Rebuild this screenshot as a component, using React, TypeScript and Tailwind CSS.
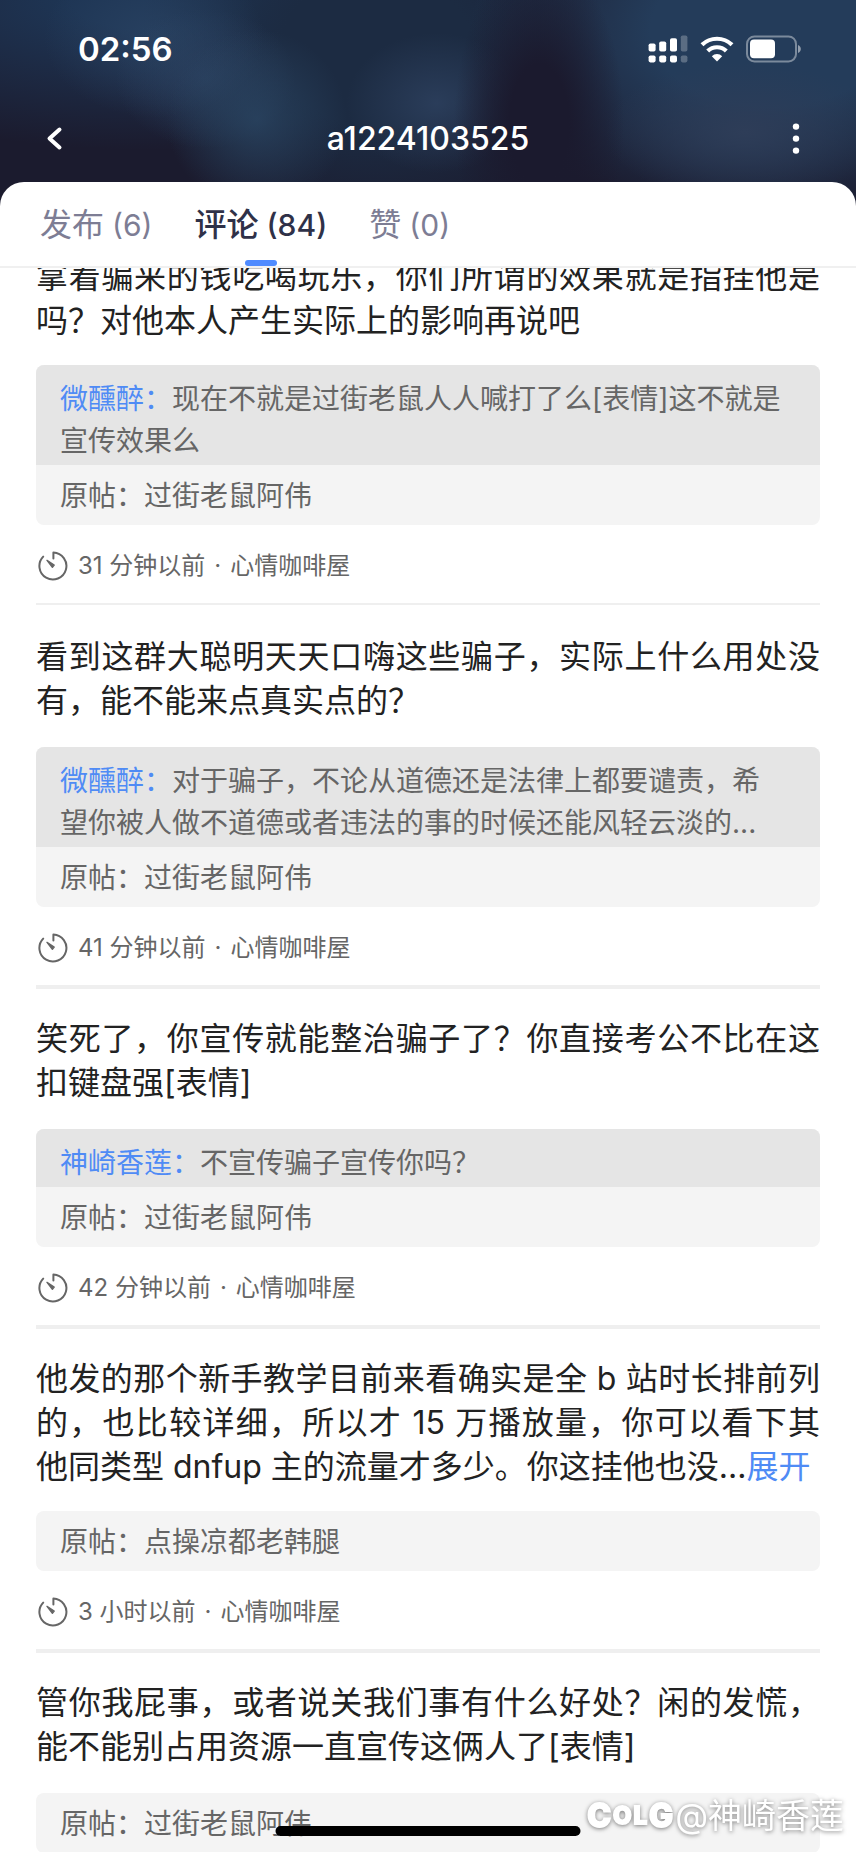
import React, { useState } from 'react';
import { clsx } from 'clsx';

interface Comment {
  id: number;
  lines: string[];
  long?: boolean;
  truncated?: boolean;
  reply?: { user: string; text: string };
  post: string;
  time?: string;
}

const comments: Comment[] = [
  {
    id: 1,
    lines: ['拿着骗来的钱吃喝玩乐，你们所谓的效果就是指挂他是', '吗？对他本人产生实际上的影响再说吧'],
    long: true,
    reply: { user: '微醺醉', text: '现在不就是过街老鼠人人喊打了么[表情]这不就是宣传效果么' },
    post: '过街老鼠阿伟',
    time: '31 分钟以前',
  },
  {
    id: 2,
    lines: ['看到这群大聪明天天口嗨这些骗子，实际上什么用处没', '有，能不能来点真实点的？'],
    reply: { user: '微醺醉', text: '对于骗子，不论从道德还是法律上都要谴责，希望你被人做不道德或者违法的事的时候还能风轻云淡的...' },
    post: '过街老鼠阿伟',
    time: '41 分钟以前',
  },
  {
    id: 3,
    lines: ['笑死了，你宣传就能整治骗子了？你直接考公不比在这', '扣键盘强[表情]'],
    reply: { user: '神崎香莲', text: '不宣传骗子宣传你吗？' },
    post: '过街老鼠阿伟',
    time: '42 分钟以前',
  },
  {
    id: 4,
    lines: [
      '他发的那个新手教学目前来看确实是全 b 站时长排前列',
      '的，也比较详细，所以才 15 万播放量，你可以看下其',
      '他同类型 dnfup 主的流量才多少。你这挂他也没...',
    ],
    long: true,
    truncated: true,
    post: '点操凉都老韩腿',
    time: '3 小时以前',
  },
  {
    id: 5,
    lines: ['管你我屁事，或者说关我们事有什么好处？闲的发慌，', '能不能别占用资源一直宣传这俩人了[表情]'],
    post: '过街老鼠阿伟',
  },
];

const tabs = [
  { id: 'posts', label: '发布', count: 6 },
  { id: 'comments', label: '评论', count: 84 },
  { id: 'likes', label: '赞', count: 0 },
];

function StatusIcons() {
  return (
    <div className="flex items-center">
      <svg width="40" height="28" viewBox="0 0 40 28" fill="#fff" aria-hidden="true">
        <rect x="0.6" y="8.5" width="7" height="8" rx="1.8" />
        <rect x="11.2" y="6.5" width="7" height="10" rx="1.8" />
        <rect x="22" y="3.2" width="7" height="13.3" rx="1.8" />
        <rect x="0.6" y="20.4" width="7" height="7" rx="1.8" />
        <rect x="11.2" y="20.4" width="7" height="7" rx="1.8" />
        <rect x="22" y="20.4" width="7" height="7" rx="1.8" />
        <g opacity="0.25">
          <rect x="32.8" y="0.5" width="6.6" height="16" rx="1.8" />
          <rect x="32.8" y="20.4" width="6.6" height="7" rx="1.8" />
        </g>
      </svg>
      <svg className="ml-3" width="34" height="26" viewBox="0 0 34 26" fill="none" stroke="#fff" aria-hidden="true">
        <path d="M2 8.8a21.6 21.6 0 0 1 30 0" strokeWidth="4.2" />
        <path d="M7.7 15a13.4 13.4 0 0 1 18.6 0" strokeWidth="4.2" />
        <path d="M17 25.4l-5.2-5.2a7.4 7.4 0 0 1 10.4 0z" fill="#fff" stroke="none" />
      </svg>
      <svg className="ml-3" width="56" height="28" viewBox="0 0 56 28" aria-hidden="true">
        <rect x="1" y="1.4" width="49" height="25" rx="7.5" fill="none" stroke="#fff" strokeOpacity="0.4" strokeWidth="2" />
        <rect x="4" y="4.6" width="25" height="18.6" rx="4" fill="#fff" />
        <path d="M52 10v8c2-1 2.8-2.4 2.8-4s-.8-3-2.8-4z" fill="#fff" fillOpacity="0.5" />
      </svg>
    </div>
  );
}

function ClockIcon() {
  return (
    <svg width="30" height="30" viewBox="0 0 30 30" fill="none" stroke="#666" strokeWidth="2" strokeLinecap="round" strokeLinejoin="round" aria-hidden="true">
      <path d="M15.4 7.6V1.5A13.5 13.5 0 1 1 5.2 5.6" />
      <path d="M9 9.4l7.2 4.6-1.8 2.2z" fill="#666" strokeWidth="1.4" />
    </svg>
  );
}

function CommentItem({ comment }: { comment: Comment }) {
  const { lines, long, truncated, reply, post, time } = comment;

  return (
    <article>
      <p className="text-[32px] leading-[44px] text-[#222]">
        {lines.map((line, i) => (
          <span key={line} className={clsx('block', i < lines.length - 1 && '[text-align-last:justify]')}>
            {line}
            {truncated && i === lines.length - 1 && (
              <button type="button" className="text-[#4f8bf5]">展开</button>
            )}
          </span>
        ))}
      </p>

      <div className={clsx('overflow-hidden rounded-lg bg-[#f4f4f4] text-[28px] leading-[42px] text-[#666]', long ? 'mt-[22px]' : 'mt-6')}>
        {reply && (
          <p className="bg-[#e5e5e5] pt-[13px] pr-9 pb-[3px] pl-6">
            <a href="#user" className="text-[#4f8bf5]">{reply.user}：</a>
            {reply.text}
          </p>
        )}
        <p className="px-6 pt-[10px] pb-2">原帖：{post}</p>
      </div>

      {time && (
        <div className="mt-5 flex h-[42px] items-center gap-[10px] pl-[2px] text-2xl text-[#666]">
          <ClockIcon />
          <div className="flex gap-[9px]">
            <time>{time}</time>
            <span>·</span>
            <span>心情咖啡屋</span>
          </div>
        </div>
      )}
    </article>
  );
}

export default function App() {
  const [activeTab, setActiveTab] = useState('comments');

  return (
    <div className="relative flex h-screen flex-col overflow-hidden bg-white font-['Inter','Noto_Sans_CJK_SC',sans-serif]">
      {/* Blurred cover */}
      <header className="shrink-0 bg-[#1b1b2e] bg-[radial-gradient(ellipse_85px_170px_at_63%_60%,#1b1a2e_35%,transparent),radial-gradient(ellipse_90px_70px_at_51%_50%,#34496a99,transparent),radial-gradient(ellipse_140px_70px_at_87%_64%,#2e3d58,transparent),radial-gradient(ellipse_90px_90px_at_30%_58%,#2a4562cc,transparent),radial-gradient(ellipse_90px_70px_at_24%_38%,#2e4666aa,transparent),radial-gradient(ellipse_110px_80px_at_18%_18%,#2c4666aa,transparent),radial-gradient(ellipse_300px_190px_at_90%_15%,#243c5a_40%,transparent),radial-gradient(ellipse_240px_190px_at_44%_25%,#1c2b42_40%,transparent),radial-gradient(ellipse_420px_150px_at_18%_0%,#1e3554_20%,transparent)] pb-[26px] text-white">
        <div className="flex h-[98px] items-center justify-between pr-[54px] pl-[78px]">
          <time className="text-[33px] leading-none font-semibold">02:56</time>
          <StatusIcons />
        </div>
        <div className="grid h-[82px] grid-cols-[64px_1fr_64px] items-center px-6">
          <button type="button" aria-label="返回" className="flex h-14 items-center pl-[21px]">
            <svg width="18" height="26" viewBox="0 0 18 26" fill="none" stroke="#fff" strokeWidth="4" strokeLinecap="round" strokeLinejoin="round">
              <path d="M14.5 3.500L4.500 12.500l10 9" />
            </svg>
          </button>
          <h1 className="text-center text-[32px] leading-none font-medium">a1224103525</h1>
          <button type="button" aria-label="更多" className="flex h-14 items-center justify-end pr-8">
            <svg width="8" height="32" viewBox="0 0 8 32" fill="#fff">
              <circle cx="4" cy="3.6" r="3.2" />
              <circle cx="4" cy="15.6" r="3.2" />
              <circle cx="4" cy="27.6" r="3.2" />
            </svg>
          </button>
        </div>
      </header>

      <main className="-mt-6 flex min-h-0 flex-1 flex-col rounded-t-3xl bg-white">
        {/* Tabs */}
        <nav className="flex h-[86px] shrink-0 gap-[42px] border-b-2 border-[#f0f0f0] px-10">
          {tabs.map((tab) => (
            <button
              key={tab.id}
              type="button"
              onClick={() => setActiveTab(tab.id)}
              className={clsx(
                'relative flex items-center gap-2 pt-[2px] text-[32px]',
                activeTab === tab.id ? 'font-medium text-[#2f3148]' : 'text-[#7d7d94]'
              )}
            >
              <span>{tab.label}</span>
              <span className="text-3xl">({tab.count})</span>
              {activeTab === tab.id && (
                <span className="absolute bottom-0 left-1/2 h-[6px] w-8 -translate-x-1/2 rounded-full bg-[#4f8bff]" />
              )}
            </button>
          ))}
        </nav>

        {/* Comment list */}
        <div className="min-h-0 flex-1 overflow-hidden px-9">
          <div className="-mt-[13px]">
            {comments.map((comment, i) => (
              <div key={comment.id}>
                {i > 0 && (
                  <div className="mt-4 mb-7 h-1">
                    <div className={clsx('bg-[#efefef]', i === 1 ? 'h-[2px]' : 'h-1')} />
                  </div>
                )}
                <CommentItem comment={comment} />
              </div>
            ))}
          </div>
        </div>
      </main>

      {/* Home indicator */}
      <div className="absolute bottom-4 left-1/2 h-[10px] w-[305px] -translate-x-1/2 rounded-full bg-black" />

      {/* Watermark */}
      <div className="absolute right-3 bottom-3 flex items-center gap-[2px] text-white drop-shadow-[0_1px_2px_rgba(0,0,0,0.5)]">
        <span className="flex items-center gap-[2px] font-extrabold [-webkit-text-stroke:2px_white]">
          <span className="text-[32px]">C</span>
          <span className="text-2xl">O</span>
          <span className="text-2xl">L</span>
          <span className="text-[32px]">G</span>
        </span>
        <span className="text-[34px] leading-[48px]">@神崎香莲</span>
      </div>
    </div>
  );
}
